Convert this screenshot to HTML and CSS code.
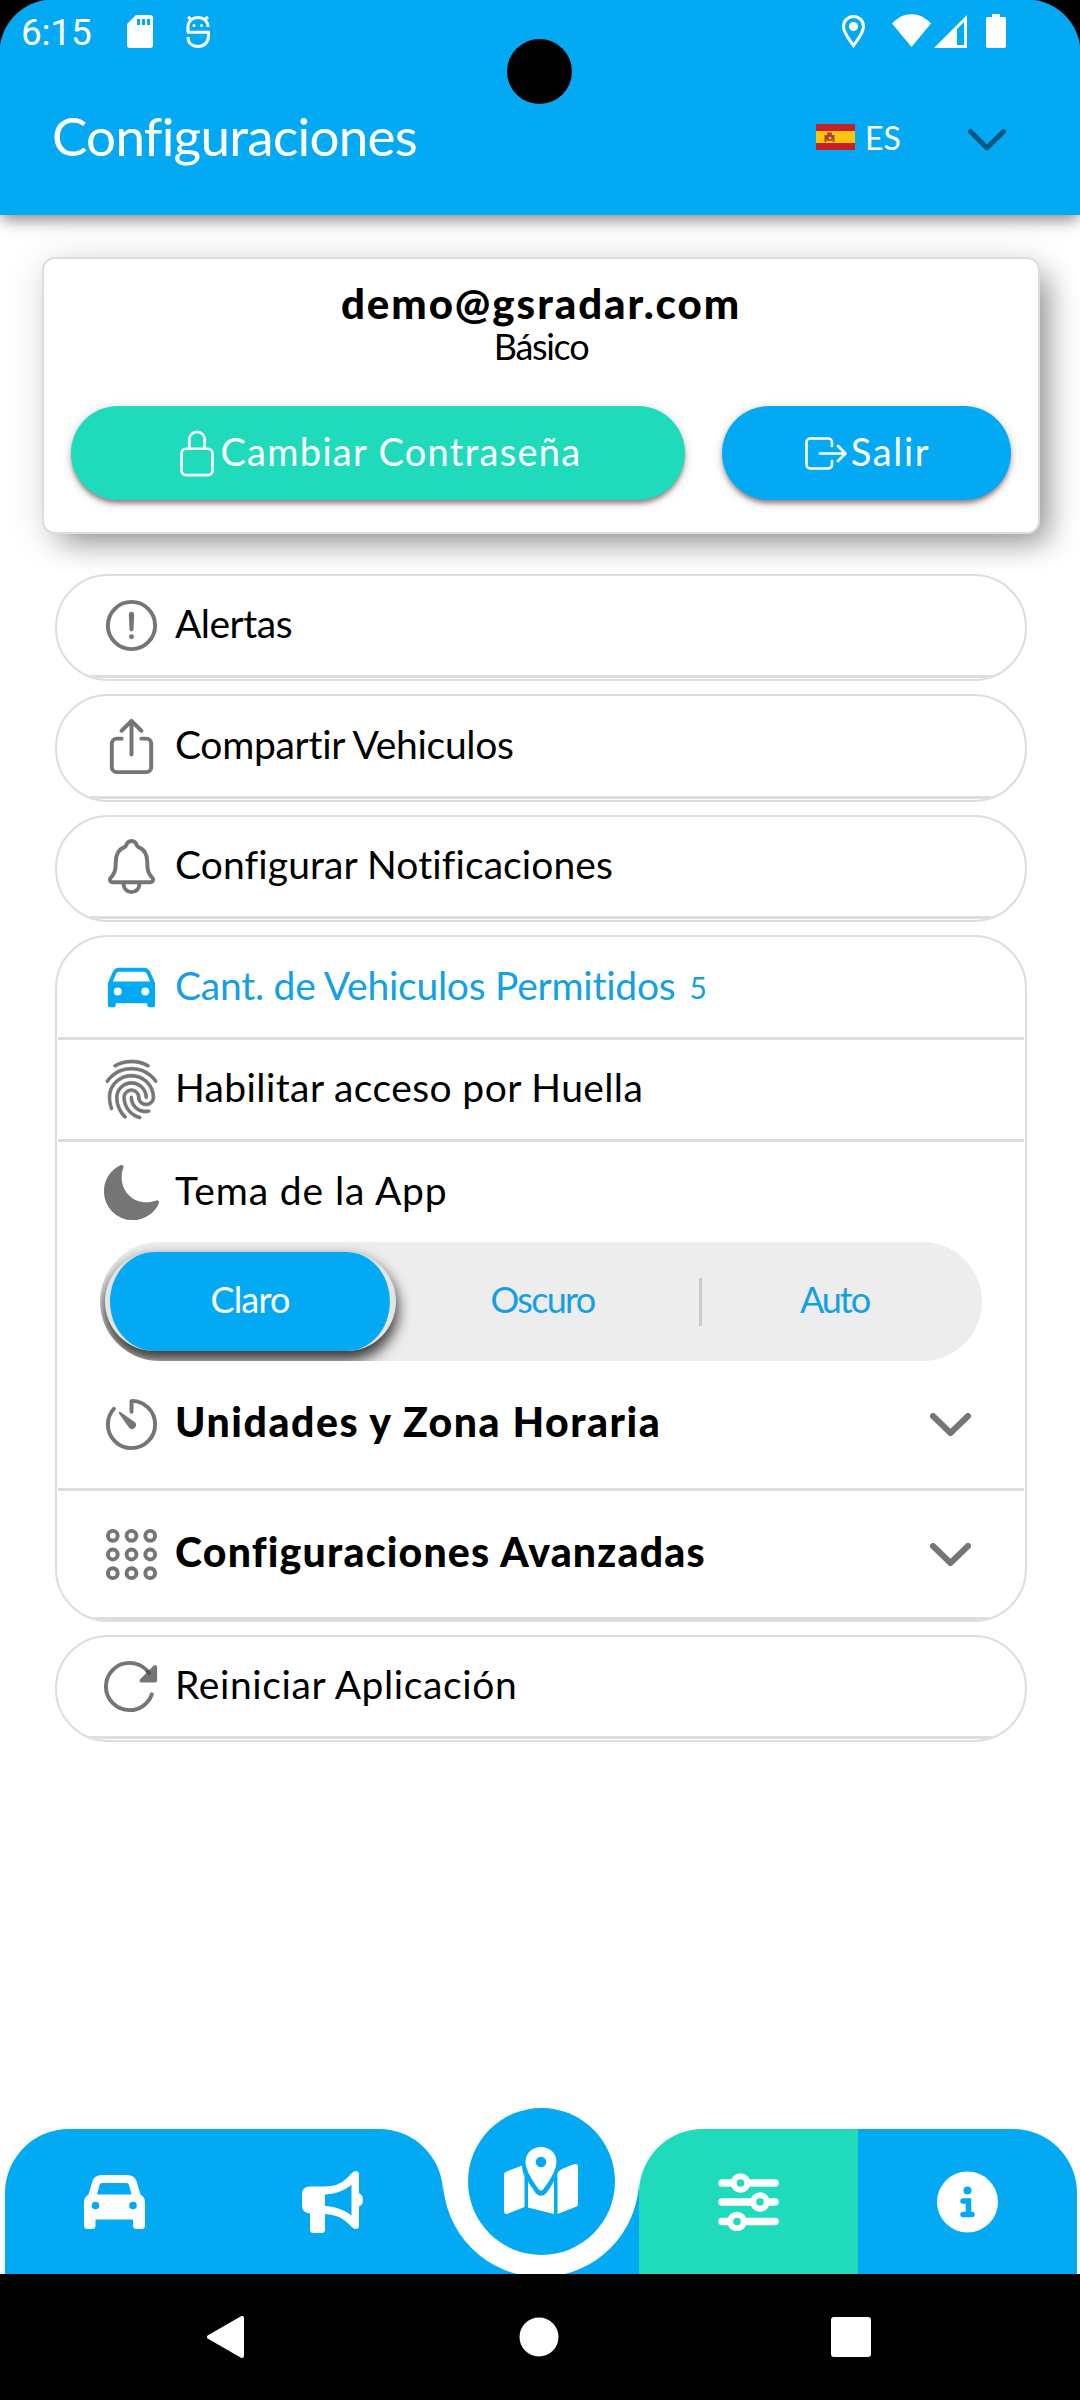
FILE: index.html
```html
<!DOCTYPE html>
<html lang="es">
<head>
<meta charset="utf-8">
<title>Configuraciones</title>
<link rel="stylesheet" href="styles.css">
</head>
<body>
<div class="screen">
  <header class="header">
    <div class="status">
      <span class="clock">6:15</span>
      <svg class="st-sd" viewBox="0 0 26 33"><path fill="#fff" fill-rule="evenodd" d="M9 0h14a3 3 0 013 3v27a3 3 0 01-3 3H3a3 3 0 01-3-3V9zM10 4v6h3V4zm5 0v6h3V4zm5 0v6h3V4z"/></svg>
      <svg class="st-s" viewBox="0 0 24 33" fill="none" stroke="#fff" stroke-width="3"><path d="M2 17.500V12C2 6 6.500 2.500 12 2.500S22 6 22 12M1 17.200H22.400V21C22.400 27.500 18 31.500 12 31.500S2 28 2 22"/><path d="M2 2l4 3M22 2l-4 3"/><circle cx="8" cy="10.500" r="1.500" fill="#fff" stroke="none"/><circle cx="15.500" cy="10.500" r="1.500" fill="#fff" stroke="none"/></svg>
      <svg class="st-pin" viewBox="0 0 23 33"><path fill="none" stroke="#fff" stroke-width="3" d="M11.500 30.500C7 24 1.500 18 1.500 11.500a10 10 0 0120 0C21.500 18 16 24 11.500 30.500z"/><circle cx="11.500" cy="11.500" r="4.500" fill="#fff"/></svg>
      <svg class="st-wifi" viewBox="0 0 39 33"><path fill="#fff" d="M0 9.500C11-3 28-3 39 9.500L19.500 33z"/></svg>
      <svg class="st-cell" viewBox="0 0 33 33"><path fill="#fff" fill-rule="evenodd" d="M33 0v33H0zM23 14v16h7V7z"/></svg>
      <svg class="st-bat" viewBox="0 0 20 34"><path fill="#fff" d="M6 0h8v3h4a2 2 0 012 2v27a2 2 0 01-2 2H2a2 2 0 01-2-2V5a2 2 0 012-2h4z"/></svg>
    </div>
    <div class="titlebar">
      <h1 class="title">Configuraciones</h1>
      <svg class="flag" viewBox="0 0 39 26"><path fill="#c52026" d="M0 0h39v26H0z"/><path fill="#ffc40d" d="M0 7h39v12H0z"/><g fill="#a8402a"><circle cx="13.500" cy="13.500" r="3.500"/><path d="M8.500 11h2v7h-2zM16.500 11h2v7h-2zM11 8.500h5v2h-5z"/></g><circle cx="14" cy="14" r="1.500" fill="#e3a9a0"/></svg>
      <span class="lang">ES</span>
      <svg class="lang-chev" viewBox="0 0 38 22"><path d="M2.500 2.500L19 19 35.500 2.500"/></svg>
    </div>
    <i class="camera"></i>
  </header>

  <section class="account">
    <strong class="email">demo@gsradar.com</strong>
    <span class="plan">Básico</span>
    <div class="actions">
      <button class="btn btn-pass"><svg class="ic-lock" viewBox="80 17 352 480"><path d="M336 208v-95a80 80 0 00-160 0v95"/><rect x="96" y="208" width="320" height="272" rx="48"/></svg><span class="t">Cambiar Contraseña</span></button>
      <button class="btn btn-exit"><svg class="ic-exit" viewBox="32 80 448 352"><path d="M320 176v-40a40 40 0 00-40-40H88a40 40 0 00-40 40v240a40 40 0 0040 40h192a40 40 0 0040-40v-40M384 176l80 80-80 80M191 256h273"/></svg><span class="t">Salir</span></button>
    </div>
  </section>

  <main class="lists">
    <div class="list"><div class="row">
      <svg class="ic line" viewBox="0 0 512 512"><circle cx="256" cy="256" r="192"/><path d="M250.260 166.050L256 288l5.730-121.950a5.740 5.740 0 00-5.790-6h0a5.740 5.740 0 00-5.680 6z"/><circle class="solid" cx="256" cy="348" r="20"/></svg>
      <span class="t t-alerts">Alertas</span></div></div>
    <div class="list share"><div class="row">
      <svg class="ic line" viewBox="0 0 512 512"><path d="M336 192h40a40 40 0 0140 40v192a40 40 0 01-40 40H136a40 40 0 01-40-40V232a40 40 0 0140-40h40M336 128l-80-80-80 80M256 321V48"/></svg>
      <span class="t t-share">Compartir Vehiculos</span></div></div>
    <div class="list"><div class="row">
      <svg class="ic line" viewBox="0 0 512 512"><path d="M427.680 351.430C402 320 383.870 304 383.870 217.350 383.870 138 343.350 109.730 310 96c-4.430-1.820-8.600-6-9.950-10.550C294.200 65.540 277.800 48 256 48s-38.210 17.550-44 37.470c-1.350 4.600-5.520 8.710-9.950 10.530-33.390 13.750-73.870 41.920-73.870 121.350C128.130 304 110 320 84.320 351.430 73.680 364.450 83 384 101.610 384h308.880c18.510 0 27.770-19.610 17.190-32.570zM320 384v16a64 64 0 01-128 0v-16"/></svg>
      <span class="t t-notif">Configurar Notificaciones</span></div></div>

    <div class="list group">
      <div class="row r-first blue">
        <svg class="ic" viewBox="0 0 512 512"><path d="M447.680 220.780a16 16 0 00-1-3.080l-37.780-88.160C400.190 109.170 379 96 354.890 96H157.110c-24.090 0-45.300 13.170-54 33.540L65.290 217.700A15.720 15.720 0 0064 224v176a16 16 0 0016 16h32a16 16 0 0016-16v-16h256v16a16 16 0 0016 16h32a16 16 0 0016-16V224a16.150 16.150 0 00-.32-3.220zM144 320a32 32 0 1132-32 32 32 0 01-32 32zm224 0a32 32 0 1132-32 32 32 0 01-32 32zM104.260 208l28.230-65.850C136.110 133.690 146 128 157.110 128h197.780c11.100 0 21 5.690 24.620 14.150L407.740 208z"/></svg>
        <span class="t t-count">Cant. de Vehiculos Permitidos</span><span class="t t-num">5</span>
      </div>
      <div class="row r-mid">
        <svg class="ic" viewBox="0 0 512 512"><path stroke="#757575" stroke-width="6" d="M390.420 75.280a10.450 10.450 0 01-5.320-1.440C340.720 50.080 302.350 40 256.350 40c-45.770 0-89.230 11.280-128.760 33.840C122 77 115.110 74.800 111.870 69a12.400 12.400 0 014.630-16.320A281.810 281.810 0 01256.350 16c49.230 0 92.230 11.280 139.390 36.480a12 12 0 014.850 16.080 11.300 11.300 0 01-10.170 6.720zm-330.790 126a11.730 11.730 0 01-6.700-2.160 12.260 12.260 0 01-2.780-16.800c22.890-33.600 52-60 86.690-78.480 72.580-38.840 165.510-39.120 238.320-.24 34.680 18.480 63.800 44.640 86.690 78a12.290 12.290 0 01-2.780 16.800 11.260 11.260 0 01-16.180-2.880c-20.800-30.240-47.150-54-78.360-70.560-66.340-35.280-151.180-35.280-217.290.24-31.440 16.800-57.790 40.800-78.590 71.040a10.160 10.160 0 01-9.020 5.040zM204.100 491a10.660 10.660 0 01-8.090-3.600C175.900 466.480 165 453 149.550 424c-16-29.520-24.270-65.520-24.270-104.160 0-71.280 58.710-129.360 130.840-129.360S387 248.560 387 319.840a11.560 11.560 0 11-23.110 0c0-58.080-48.320-105.360-107.720-105.360S148.400 261.760 148.400 319.840c0 34.560 7.390 66.480 21.490 92.400 14.800 27.600 25 39.360 42.770 58.080a12.670 12.670 0 010 16.800A12.070 12.070 0 01204.100 491zm165.750-44.400c-27.510 0-51.780-7.200-71.660-21.360a129.100 129.100 0 01-55-105.360 11.570 11.570 0 1123.120 0 104.280 104.280 0 0044.840 85.440c16.410 11.520 35.600 17 58.720 17a147.410 147.410 0 0024-2.400c6.240-1.200 12.250 3.120 13.400 9.840a11.920 11.920 0 01-9.470 13.920 152.280 152.280 0 01-27.950 2.880zM323.380 496a13 13 0 01-3-.48c-36.760-10.560-60.800-24.720-86-50.400-32.370-33.360-50.160-77.760-50.160-125.280 0-38.880 31.900-70.560 71.190-70.560s71.200 31.680 71.200 70.560c0 25.680 21.500 46.560 48.080 46.560s48.080-20.880 48.080-46.560c0-90.480-75.130-163.920-167.590-163.920-65.650 0-125.750 37.920-152.790 96.720-9 19.440-13.640 42.240-13.640 67.200 0 18.720 1.610 48.240 15.480 86.640 2.320 6.240-.69 13.200-6.700 15.360a11.340 11.340 0 01-14.790-7 276.390 276.390 0 01-16.880-95c0-28.800 5.320-55 15.720-77.760 30.750-67 98.940-110.400 173.600-110.400 105.180 0 190.710 84.240 190.710 187.920 0 38.880-31.900 70.560-71.200 70.560s-71.200-31.680-71.200-70.560c0-25.680-21.490-46.560-48.080-46.560s-48.080 20.880-48.080 46.560c0 41 15.260 79.440 43.230 108.240 22 22.560 43 35 75.590 44.160 6.240 1.680 9.710 8.400 8.100 14.640A11.290 11.290 0 01323.380 496z"/></svg>
        <span class="t t-finger">Habilitar acceso por Huella</span>
      </div>
      <div class="row r-theme">
        <svg class="ic" viewBox="0 0 512 512"><path d="M264 480A232 232 0 0132 248c0-94 54-178.280 137.610-214.670a16 16 0 0121.060 21.060C181.070 76.430 176 104.660 176 136c0 110.280 89.720 200 200 200 31.340 0 59.570-5.070 81.610-14.670a16 16 0 0121.060 21.060C442.280 426 358 480 264 480z"/></svg>
        <span class="t t-theme">Tema de la App</span>
      </div>
      <div class="segment">
        <span class="seg on">Claro</span>
        <span class="seg mid">Oscuro</span>
        <span class="seg auto">Auto</span>
      </div>
      <div class="row r-units">
        <svg class="ic line" viewBox="0 0 512 512"><path d="M112.910 128A191.850 191.850 0 0064 254c-1.180 106.350 85.650 193.800 192 194 106.200.2 192-85.830 192-192 0-104.540-83.550-189.610-187.500-192a4.360 4.360 0 00-4.500 4.370V152"/><path class="solid" d="M233.380 278.630l-79-113a8.130 8.130 0 0111.320-11.320l113 79a32.500 32.500 0 01-37.250 53.260 33.210 33.210 0 01-8.070-7.940z"/></svg>
        <span class="t heavy t-units">Unidades y Zona Horaria</span>
        <svg class="chev" viewBox="0 0 41 23"><path d="M3 3l17.500 17L38 3"/></svg>
      </div>
      <div class="row r-adv">
        <svg class="ic line" viewBox="0 0 512 512"><circle cx="104" cy="104" r="40"/><circle cx="256" cy="104" r="40"/><circle cx="408" cy="104" r="40"/><circle cx="104" cy="256" r="40"/><circle cx="256" cy="256" r="40"/><circle cx="408" cy="256" r="40"/><circle cx="104" cy="408" r="40"/><circle cx="256" cy="408" r="40"/><circle cx="408" cy="408" r="40"/></svg>
        <span class="t heavy t-adv">Configuraciones Avanzadas</span>
        <svg class="chev" viewBox="0 0 41 23"><path d="M3 3l17.500 17L38 3"/></svg>
      </div>
    </div>

    <div class="list"><div class="row">
      <svg class="ic line" viewBox="0 0 512 512"><path class="solid" d="M464 97.420V208a16 16 0 01-16 16H337.420c-14.260 0-21.400-17.230-11.320-27.310L436.690 86.100C446.770 76 464 83.160 464 97.420z"/><path d="M400 148l-21.120-24.570A191.430 191.430 0 00240 64C134 64 48 150 48 256s86 192 192 192a192.090 192.090 0 00181.070-128"/><path stroke="#505050" stroke-width="28" d="M388 134l12 14"/></svg>
      <span class="t t-restart">Reiniciar Aplicación</span></div></div>
  </main>

  <nav class="tabs">
    <a class="tab first"><svg width="61" height="54" viewBox="0 0 61 54"><path fill="#fff" fill-rule="evenodd" d="M17.500 0h26C48 0 51 2 52.500 6L56.500 19.500Q61 22 61 27.500V50.500Q61 54 57.500 54h-5Q49 54 49 50.500V44.500H11.500V50.500Q11.500 54 8 54H3.500Q0 54 0 50.500V27.500Q0 22 4.500 19.500L8.500 6C10 2 13 0 17.500 0zM18 8Q16 8 15.500 10L13 19.500H47.500L45 10Q44.500 8 42.500 8zM11.500 26.800a3.800 3.800 0 100 7.600 3.800 3.800 0 100-7.600zm37.500 0a3.800 3.800 0 100 7.600 3.800 3.800 0 100-7.600z"/></svg></a>
    <a class="tab second"><svg width="61" height="62" viewBox="0 0 61 62"><path fill="#fff" fill-rule="evenodd" d="M57 4V22Q61 24 61 29T57 35.500V54.500Q57 58 54 58 52 58 50.500 56.500L44 50.500Q36 43.500 23 43V58.500Q23 62 19.500 62H11.500Q8 62 8 58.500V42.500Q0 42 0 34V23.500Q0 15.500 8 15.500H23Q36 15.500 44 8L50.500 1.500Q52 0 54 0 57 0 57 4zM49.500 14Q38 23 23 23.500V35Q38 35.500 49.500 44.500z"/></svg></a>
    <div class="notch">
      <svg width="196" height="145" viewBox="0 0 196 145"><path fill="#04a9f4" d="M0 50A98 98 0 00196 50V145H0z"/><circle cx="98" cy="48.500" r="98" fill="#fff"/></svg>
      <a class="map"><svg width="74" height="67" viewBox="0 0 74 67"><path fill="#fff" fill-rule="evenodd" d="M37 0C46 0 52.500 6.500 52.500 15 52.500 24 43 37 39.500 42Q37 45 34.500 42C31 37 21.500 24 21.500 15 21.500 6.500 28 0 37 0zM37 9.700a5.300 5.300 0 100 10.600 5.300 5.300 0 100-10.600z"/><path fill="#fff" d="M18 18.500C18.500 24 19 26 20.500 29V60L3 67Q0 67.500 0 64V27.500Q0 25.500 2 24.700zM24 34.500C28 41 30 43.500 32 46.500Q37 51 42 46.500C44 43.500 47 40 50 34V67L24 60.500zM53.500 26Q55 22 71 17Q74 16.500 74 20V57Q74 59 72 59.700L53.500 67z"/></svg></a>
    </div>
    <a class="tab green"><svg width="61" height="58" viewBox="0 0 61 58" fill="none" stroke="#fff" stroke-width="7.500" stroke-linecap="round"><path d="M4 10h53M4 29h53M4 48.500h53"/><g fill="#1fdbbc" stroke-width="6"><circle cx="22.500" cy="10" r="6.800"/><circle cx="42" cy="29" r="6.800"/><circle cx="19" cy="48.500" r="6.800"/></g></svg></a>
    <a class="tab last"><svg width="61" height="62" viewBox="0 0 61 62"><circle cx="30.500" cy="31" r="30.500" fill="#fff"/><circle cx="30.500" cy="19.500" r="4" fill="#04a9f4"/><path d="M26 30h5.500v13.500M26 43.500h9" fill="none" stroke="#04a9f4" stroke-width="5.500" stroke-linecap="round"/></svg></a>
  </nav>
  <footer class="sysnav">
    <svg width="37" height="42" viewBox="0 0 37 42"><path fill="#fff" stroke="#fff" stroke-width="4" stroke-linejoin="round" d="M2 21L35 2v38z"/></svg>
    <svg class="home" width="40" height="40" viewBox="0 0 40 40"><circle cx="20" cy="20" r="19.500" fill="#fff"/></svg>
    <svg width="40" height="40" viewBox="0 0 40 40"><rect width="40" height="40" rx="3" fill="#fff"/></svg>
  </footer>
</div>
</body>
</html>
```

FILE: styles.css
```css
* { box-sizing: border-box; }
html, body { margin: 0; padding: 0; }
body { width: 1080px; height: 2400px; background: #fff; overflow: hidden; font-family: Lato, "Open Sans", sans-serif; font-variant-ligatures: none; color: #000; }
svg { display: block; flex: none; }
.screen { display: flex; flex-direction: column; width: 1080px; height: 2400px; background: #fff; }
.t { white-space: nowrap; padding-bottom: 5px; }

/* Header */
.header { position: relative; height: 215px; flex: none; background: radial-gradient(circle at 53px 53px, #04a9f4 53px, #000 54px) 0 0 / 53px 53px no-repeat, radial-gradient(circle at 0 53px, #04a9f4 53px, #000 54px) 100% 0 / 53px 53px no-repeat, #04a9f4; box-shadow: 0 6px 14px -2px rgba(0,0,0,.45), 0 10px 22px rgba(0,0,0,.06); color: #fff; }
.camera { position: absolute; left: 507px; top: 39px; width: 65px; height: 65px; border-radius: 50%; background: #000; }
.status { display: flex; align-items: flex-start; padding: 14px 74px 0 21px; height: 64px; }
.clock { font: 37px/40px Roboto, sans-serif; width: 106px; margin-top: -1px; letter-spacing: -.2px; }
.st-sd { width: 26px; height: 33px; margin-top: 1px; }
.st-s { width: 24px; height: 33px; margin: 1px 0 0 33px; }
.st-pin { width: 23px; height: 33px; margin: 1px 0 0 auto; }
.st-wifi { width: 39px; height: 33px; margin-left: 27px; }
.st-cell { width: 33px; height: 33px; margin: 1px 0 0 3px; }
.st-bat { width: 20px; height: 34px; margin-left: 19px; }
.titlebar { display: flex; align-items: center; height: 145px; padding: 0 74px 0 52px; }
.title { margin: 0 auto 0 0; font-size: 53px; font-weight: 400; line-height: 60px; padding-bottom: 2px; letter-spacing: -.75px; }
.flag { width: 39px; height: 26px; margin-right: 9px; }
.lang { font-size: 32px; width: 104px; padding: 1px 0 0 1px; }
.lang-chev { width: 38px; height: 22px; margin-top: 6px; }
.lang-chev path { fill: none; stroke: #02587f; stroke-width: 5; stroke-linecap: round; stroke-linejoin: round; }

/* Account card */
.account { display: flex; flex-direction: column; align-items: center; flex: none; height: 277px; margin: 42px 40px 0 42px; padding: 19px 27px 0 27px; background: #fff; border: 2px solid #ddd; border-radius: 13px; box-shadow: 14px 14px 30px -6px rgba(0,0,0,.38), 0 4px 40px rgba(0,0,0,.12); }
.email { font-size: 42px; line-height: 50px; font-weight: 900; height: 47px; letter-spacing: 1.95px; }
.plan { font-size: 36px; line-height: 42px; height: 42px; letter-spacing: -1.3px; }
.actions { display: flex; justify-content: space-between; align-self: stretch; margin-top: 39px; }
.btn { display: flex; align-items: center; justify-content: center; height: 94px; border: 0; border-radius: 47px; padding: 0; color: #fff; font: 38px/46px Lato, sans-serif; box-shadow: 0 4px 5px -1px rgba(60,20,20,.5), 0 2px 12px rgba(0,0,0,.16); }
.btn svg { fill: none; stroke: #fff; stroke-width: 28; stroke-linecap: round; stroke-linejoin: round; }
.btn-pass { width: 614px; background: #1fdbbc; letter-spacing: 1.3px; padding-left: 6px; }
.btn-exit { width: 289px; background: #04a9f4; letter-spacing: 1.7px; padding-left: 2px; }
.ic-lock { width: 34px; height: 47px; margin-right: 6px; }
.ic-exit { width: 42px; height: 35px; margin-right: 4px; }

/* Settings lists */
.lists { display: flex; flex-direction: column; gap: 13px; margin: 40px 53px 0 55px; }
.list { height: 107px; border: 2px solid #ddd; border-radius: 53px; background: #fff; overflow: hidden; padding: 0 1px; }
.share { height: 108px; }
.share .row { height: 103px; }
.row { display: flex; align-items: center; height: 102px; border-bottom: 3px solid #ddd; padding-left: 42px; font-size: 39px; line-height: 48px; }
.ic { width: 63px; height: 63px; margin-right: 12px; fill: #757575; }
.line { fill: none; stroke: #757575; stroke-width: 32; stroke-linecap: round; stroke-linejoin: round; }
.solid { fill: #757575; stroke: none; }
.t-alerts { letter-spacing: -.5px; }
.t-share { letter-spacing: -.3px; }
.t-notif { letter-spacing: .1px; }
.t-count { letter-spacing: -.25px; }
.t-finger { letter-spacing: .4px; }
.t-theme { letter-spacing: .9px; }
.t-restart { letter-spacing: .6px; }
.blue { color: #14a0e4; }
.blue .ic { fill: #04a9f4; }
.group { height: 687px; }
.r-first { height: 103px; }
.t-num { font-size: 30px; margin-left: 14px; padding-bottom: 0; }
.r-theme { height: 100px; border: 0; }
.segment { display: grid; grid-template-columns: 291px 303px 1fr; height: 119px; margin: 0 42px; padding: 10px 0 10px 5px; border-radius: 60px; background: #ededed; overflow: hidden; font-size: 36px; line-height: 42px; color: #14a0e4; }
.seg { position: relative; display: flex; align-items: center; justify-content: center; height: 99px; padding-bottom: 6px; }
.on { border: 0 solid #e4e4e4; border-width: 0 6px 0 5px; border-radius: 52px; background: #04a9f4; color: #fff; box-shadow: 0 8px 14px 2px rgba(0,0,0,.75); letter-spacing: -.8px; }
.mid { letter-spacing: -1.7px; padding-right: 10px; }
.auto { letter-spacing: -2px; padding-right: 12px; }
.mid::after { content: ""; position: absolute; right: -3px; top: 26px; width: 3px; height: 48px; background: #ccc; }
.r-units { height: 130px; }
.r-adv { height: 129px; }
.heavy { font-size: 41px; font-weight: 900; }
.t-units { letter-spacing: 1.55px; }
.t-adv { letter-spacing: 1.2px; }
.chev { width: 41px; height: 23px; margin: 0 53px 0 auto; fill: none; stroke: #757575; stroke-width: 6; stroke-linecap: round; stroke-linejoin: round; }

/* Tab bar */
.tabs { display: grid; grid-template-columns: 219px 219px 196px 219px 219px; height: 145px; flex: none; margin: auto 3px 0 5px; }
.tab { display: flex; align-items: center; justify-content: center; background: #04a9f4; }
.first { border-radius: 64px 0 0 0; padding-right: 1px; }
.second { border-radius: 0 64px 0 0; padding-right: 2px; }
.green { background: #1fdbbc; border-radius: 64px 0 0 0; }
.last { border-radius: 0 64px 0 0; padding-right: 1px; }
.notch { position: relative; }
.map { position: absolute; left: 25px; top: -21px; width: 147px; height: 147px; border-radius: 50%; background: #04a9f4; display: flex; align-items: center; justify-content: center; padding: 0 2px 3px 0; }
.sysnav { display: flex; flex: none; align-items: center; height: 126px; background: #000; padding: 0 209px 0 207px; justify-content: space-between; }
.home { margin-left: 3px; }
```
